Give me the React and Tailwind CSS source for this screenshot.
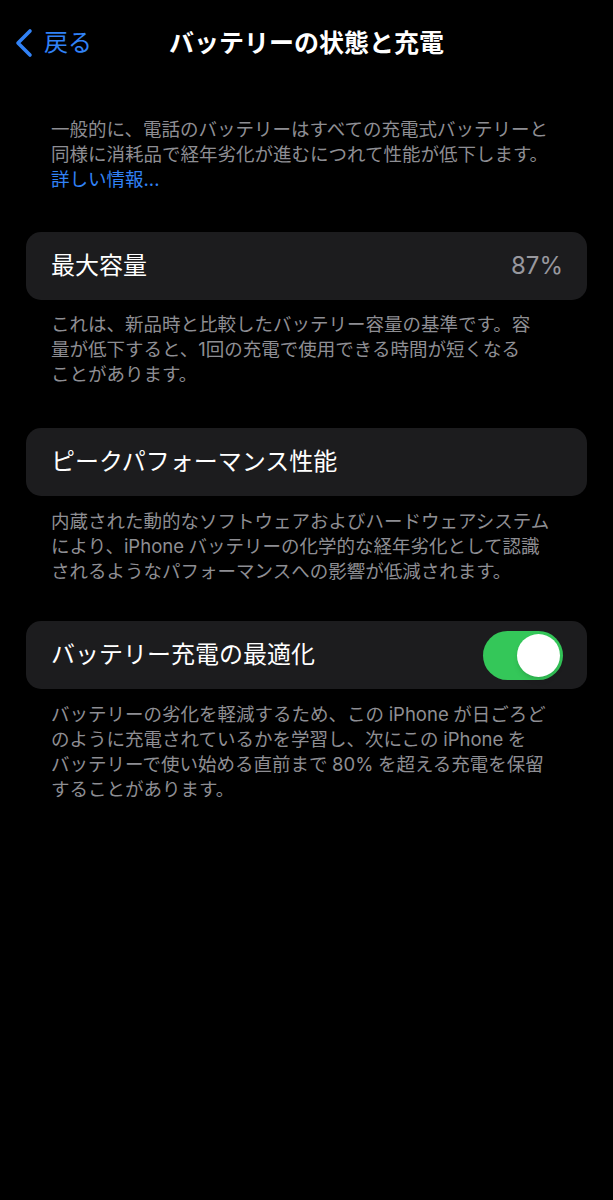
import React from "react";

const font = { fontFamily: '"Inter", "Noto Sans CJK JP", sans-serif' };

const Lines = ({ lines, className = "" }) => (
    <div className={`px-[51px] text-[18.5px] leading-[25px] text-[#8e8e93] ${className}`}>
        {lines.map((l, i) => (
            <div key={i} className="whitespace-nowrap">
                {l}
            </div>
        ))}
    </div>
);

const Card = ({ children }) => (
    <div className="mx-[26px] flex h-[68px] items-center justify-between rounded-[15px] bg-[#1c1c1e] pl-[25px] pr-[24px]">
        {children}
    </div>
);

const Toggle = () => (
    <div className="flex h-[49px] w-[80px] items-center justify-end rounded-full bg-[#34c759] p-[3px]">
        <div className="h-[43px] w-[43px] rounded-full bg-white shadow-md" />
    </div>
);

// iOS puts a little air between latin and kana
const sp = "\u2005";

const App = () => {
    return (
        <div className="min-h-[1200px] w-full bg-black" style={font}>
            <div className="relative flex h-[86px] items-center">
                <div className="flex items-center pl-[13px] text-[#3182f6]">
                    <svg width="22" height="30" viewBox="0 0 22 30" fill="none">
                        <path
                            d="M17 3 L5 15 L17 27"
                            stroke="currentColor"
                            strokeWidth="3.6"
                            strokeLinecap="round"
                            strokeLinejoin="round"
                        />
                    </svg>
                    <span className="ml-[9px] text-[24px] leading-none">戻る</span>
                </div>
                <div className="absolute inset-x-0 text-center text-[25px] font-bold leading-none text-white pointer-events-none">
                    バッテリーの状態と充電
                </div>
            </div>

            <div className="pt-[31px]">
                <Lines
                    lines={[
                        "一般的に、電話のバッテリーはすべての充電式バッテリーと",
                        "同様に消耗品で経年劣化が進むにつれて性能が低下します。",
                    ]}
                />
                <div className="px-[51px] text-[18.5px] leading-[25px] text-[#3182f6]">
                    詳しい情報...
                </div>
            </div>

            <div className="mt-[40px]">
                <Card>
                    <span className="text-[24px] text-white">最大容量</span>
                    <span className="text-[24px] text-[#98989e]">87%</span>
                </Card>
                <Lines
                    className="mt-[12px]"
                    lines={[
                        "これは、新品時と比較したバッテリー容量の基準です。容",
                        "量が低下すると、1回の充電で使用できる時間が短くなる",
                        "ことがあります。",
                    ]}
                />
            </div>

            <div className="mt-[41px]">
                <Card>
                    <span className="text-[24px] text-white">ピークパフォーマンス性能</span>
                </Card>
                <Lines
                    className="mt-[13px]"
                    lines={[
                        "内蔵された動的なソフトウェアおよびハードウェアシステム",
                        `により、iPhone${sp}バッテリーの化学的な経年劣化として認識`,
                        "されるようなパフォーマンスへの影響が低減されます。",
                    ]}
                />
            </div>

            <div className="mt-[37px]">
                <Card>
                    <span className="text-[24px] text-white">バッテリー充電の最適化</span>
                    <Toggle />
                </Card>
                <Lines
                    className="mt-[13px]"
                    lines={[
                        `バッテリーの劣化を軽減するため、この${sp}iPhone${sp}が日ごろど`,
                        `のように充電されているかを学習し、次にこの${sp}iPhone${sp}を`,
                        `バッテリーで使い始める直前まで${sp}80%${sp}を超える充電を保留`,
                        "することがあります。",
                    ]}
                />
            </div>
        </div>
    );
};

export default App;
